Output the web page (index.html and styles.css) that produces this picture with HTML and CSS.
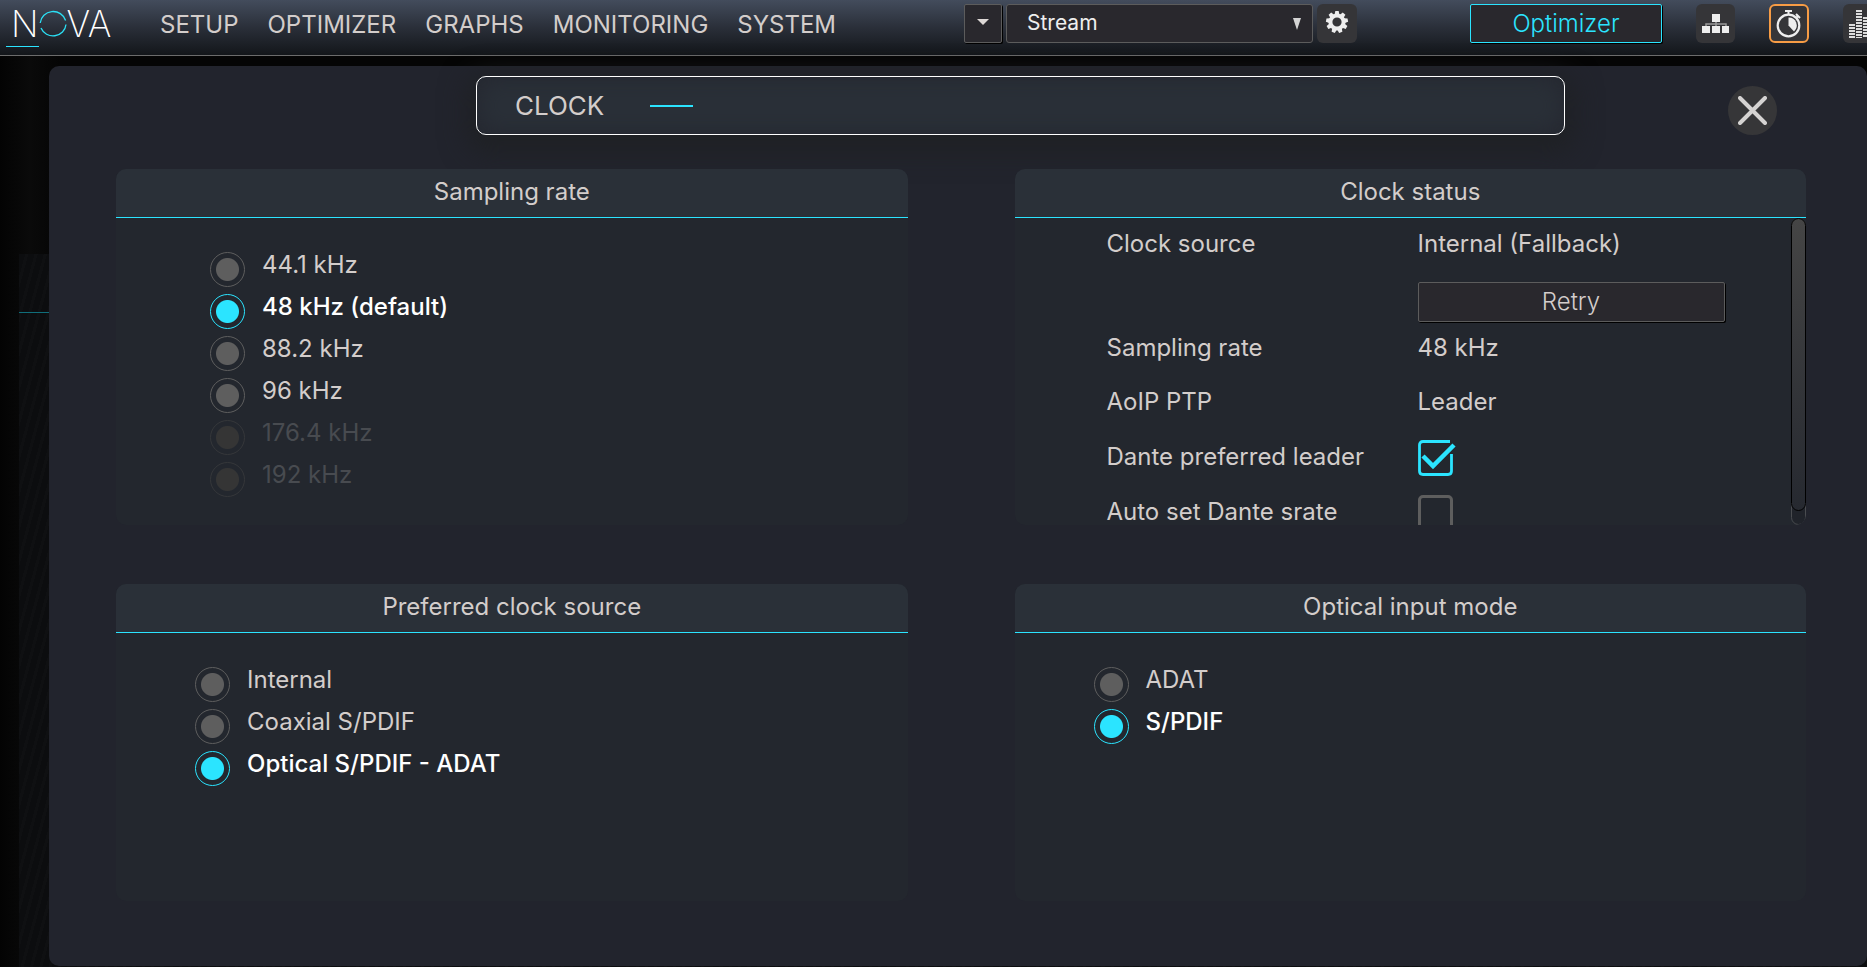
FILE: index.html
```html
<!DOCTYPE html>
<html lang="en">
<head>
<meta charset="utf-8">
<title>NOVA – Clock</title>
<link rel="stylesheet" href="styles.css">
</head>
<body>
<header class="topbar">
  <div class="menu">
    <a class="logo" href="#" aria-label="NOVA">
      <span>N</span>
      <svg class="logo-o" viewBox="0 0 28 28" aria-hidden="true"><path d="M1.2 13A13 12.6 0 0 1 26.6 10.5M27 14.500A13 12.600 0 0 1 2 18" fill="none" stroke="#2be0f5" stroke-width="1.300"/></svg>
      <span>VA</span>
    </a>
    <nav class="nav">
      <a href="#">SETUP</a>
      <a href="#">OPTIMIZER</a>
      <a href="#">GRAPHS</a>
      <a href="#">MONITORING</a>
      <a href="#">SYSTEM</a>
    </nav>
  </div>
  <div class="presets">
    <button class="drop" aria-label="Open list"><svg width="12" height="6" viewBox="0 0 12 6"><path d="M0 0h12L6 6z" fill="#ddd8d6"/></svg></button>
    <div class="select-wrap">
      <select class="select" aria-label="Preset"><option>Stream</option></select>
      <svg class="select-arrow" width="8" height="12" viewBox="0 0 8 12"><path d="M0 0h8L4 12z" fill="#d4d4d4"/></svg>
    </div>
    <button class="tool tool-gear" aria-label="Settings">
      <svg width="24" height="24" viewBox="-12 -12 24 24"><circle r="6.600" fill="none" stroke="#eee" stroke-width="4"/><g fill="#eee"><path id="tooth" d="M-2.400-7.500L-1.700-11h3.400L2.400-7.500z"/><use href="#tooth" transform="rotate(40)"/><use href="#tooth" transform="rotate(80)"/><use href="#tooth" transform="rotate(120)"/><use href="#tooth" transform="rotate(160)"/><use href="#tooth" transform="rotate(200)"/><use href="#tooth" transform="rotate(240)"/><use href="#tooth" transform="rotate(280)"/><use href="#tooth" transform="rotate(320)"/></g></svg>
    </button>
  </div>
  <div class="actions">
    <button class="optimizer">Optimizer</button>
    <button class="tool" aria-label="Network">
      <svg width="28" height="20" viewBox="0 0 28 20"><path d="M14 7v5M4 12v-2h20v2" fill="none" stroke="#999" stroke-width="1.500"/><path d="M10 0h8v8h-8zM0 12h8v7H0zM10 12h8v7h-8zM20 12h7v7h-7z" fill="#eee"/></svg>
    </button>
    <button class="tool tool-active" aria-label="Clock">
      <svg width="26" height="28" viewBox="0 0 26 28"><circle cx="12.500" cy="15.500" r="10.800" fill="none" stroke="#eee" stroke-width="2.200"/><path d="M9 1h7M12.500 1v4M20 4l4 4M22 6l-2 2" fill="none" stroke="#eee" stroke-width="2"/><path d="M12.500 7.500V15.500L18 21.500A8 8 0 0 0 12.500 7.500z" fill="#eee"/></svg>
    </button>
    <button class="tool tool-meter" aria-label="Meters">
      <svg width="28" height="28" viewBox="0 0 28 28"><path d="M3 14v14M10 0v28M17 7v21M24 3v25" stroke="#ddd" stroke-width="6" stroke-dasharray="2 1"/></svg>
    </button>
  </div>
</header>

<main class="stage">
  <div class="behind"></div>
  <section class="modal">
    <div class="modal-head">
      <h1 class="title">CLOCK<span class="dash"></span></h1>
      <button class="close" aria-label="Close"><svg width="29" height="29" viewBox="0 0 29 29"><path d="M2 2l25 25M27 2L2 27" stroke="#d5d3d2" stroke-width="4" stroke-linecap="round"/></svg></button>
    </div>

    <div class="cards">
      <section class="card">
        <h2>Sampling rate</h2>
        <div class="options options-wide">
          <label><input type="radio" name="rate"><span>44.1 kHz</span></label>
          <label><input type="radio" name="rate" checked><span>48 kHz (default)</span></label>
          <label><input type="radio" name="rate"><span>88.2 kHz</span></label>
          <label><input type="radio" name="rate"><span>96 kHz</span></label>
          <label><input type="radio" name="rate" disabled><span>176.4 kHz</span></label>
          <label><input type="radio" name="rate" disabled><span>192 kHz</span></label>
        </div>
      </section>

      <section class="card">
        <h2>Clock status</h2>
        <div class="scroller">
          <div class="status">
            <div class="row"><span>Clock source</span><span>Internal (Fallback)</span></div>
            <div class="row row-button"><button class="retry">Retry</button></div>
            <div class="row"><span>Sampling rate</span><span>48 kHz</span></div>
            <div class="row row-check"><span>AoIP PTP</span><span>Leader</span></div>
            <div class="row row-check"><label for="leader">Dante preferred leader</label>
              <span class="check"><input type="checkbox" id="leader" checked><svg viewBox="0 0 38 36"><path d="M32 1.500H5Q1.500 1.500 1.500 5v26Q1.500 34.500 5 34.500h25Q33.500 34.500 33.500 31V14" fill="none" stroke="#2be4ff" stroke-width="2.800"/><path d="M5 16l10 10L36 5" fill="none" stroke="#2be4ff" stroke-width="4.500"/></svg></span></div>
            <div class="row row-check"><label for="srate">Auto set Dante srate</label>
              <span class="check"><input type="checkbox" id="srate"></span></div>
          </div>
          <div class="track"><div class="thumb"></div></div>
        </div>
      </section>

      <section class="card">
        <h2>Preferred clock source</h2>
        <div class="options">
          <label><input type="radio" name="source"><span>Internal</span></label>
          <label><input type="radio" name="source"><span>Coaxial S/PDIF</span></label>
          <label><input type="radio" name="source" checked><span>Optical S/PDIF - ADAT</span></label>
        </div>
      </section>

      <section class="card">
        <h2>Optical input mode</h2>
        <div class="options">
          <label><input type="radio" name="optical"><span>ADAT</span></label>
          <label><input type="radio" name="optical" checked><span>S/PDIF</span></label>
        </div>
      </section>
    </div>
  </section>
</main>
</body>
</html>
```

FILE: styles.css
```css
* { box-sizing: border-box; }

body {
  margin: 0;
  min-height: 100vh;
  display: flex;
  flex-direction: column;
  overflow: hidden;
  background: #000;
  color: #d3cdcb;
  font: 400 24px/30px Inter, "Liberation Sans", sans-serif;
}

button, select { font: inherit; color: inherit; padding: 0; margin: 0; }
a { color: inherit; text-decoration: none; }

.topbar {
  display: grid;
  grid-template-columns: 964px 506px auto;
  height: 56px;
  flex: none;
  overflow: hidden;
  background: linear-gradient(#434c5c, #2a2f39 50%, #13161a);
  border-bottom: 1px solid #6c6c6c;
}

.menu { display: flex; }
.logo {
  display: flex;
  align-items: center;
  width: 160px;
  height: 47px;
  padding-left: 11px;
  color: #fff;
  font-size: 36px;
  font-weight: 200;
  background: linear-gradient(#2be4ff, #2be4ff) 6px 100% / 33px 1px no-repeat;
}
.logo-o { width: 28px; height: 28px; flex: none; }
.nav { display: flex; gap: 29px; padding-top: 10px; }

.presets, .actions { display: flex; padding-top: 4px; }
.presets { gap: 4px; }
.drop, .optimizer, .retry {
  background: #29282d;
  border: 1px solid #5c5c5c;
  border-radius: 2px;
  box-shadow: 1px 1px 0 #000;
}
.drop { display: flex; align-items: center; justify-content: center; width: 38px; height: 39px; padding-bottom: 4px; }
.select-wrap { position: relative; width: 307px; height: 39px; }
.select {
  appearance: none;
  width: 100%;
  height: 100%;
  padding: 0 20px 2px;
  background: #29282d;
  border: 1px solid #5c5c5c;
  border-radius: 3px;
  color: #eee;
  font-size: 21px;
}
.select-arrow { position: absolute; right: 12px; top: 14px; }
.tool {
  display: flex;
  flex: none;
  align-items: center;
  justify-content: center;
  width: 39px;
  height: 39px;
  background: #353538;
  border: 0;
  border-radius: 6px;
}
.tool-gear { width: 40px; padding-bottom: 3px; }
.tool-active { width: 40px; border: 2px solid #f79c45; }
.tool-meter { justify-content: flex-start; padding-left: 6px; }
.optimizer { width: 192px; height: 39px; border-color: #2be4ff; color: #2be4ff; font-weight: 300; }
.actions { gap: 34px; }

.stage {
  position: relative;
  display: flex;
  flex: 1;
  padding: 10px 0 1px 49px;
  background: linear-gradient(90deg, #030303, #0a0a0a 30px, #050505 60px), #000;
}
.behind {
  position: absolute;
  inset: 198px 0 0 19px;
  background:
    linear-gradient(#106e7a, #106e7a) 0 58px / 100% 1px no-repeat,
    repeating-linear-gradient(105deg, #0c0d0f 0 6px, #0f1012 6px 9px);
}
.modal {
  position: relative;
  flex: 1;
  border-radius: 10px;
  background: #22242d;
}
.modal-head {
  display: flex;
  align-items: flex-start;
  padding: 10px 90px 0 427px;
  height: 103px;
}
.title {
  display: flex;
  flex: 1;
  align-items: center;
  gap: 46px;
  max-width: 1089px;
  height: 59px;
  margin: 0 163px 0 0;
  padding-left: 38px;
  border: 1px solid #fff;
  border-radius: 10px;
  font-size: 26px;
  font-weight: 400;
  background: #2a3038;
  box-shadow: inset 0 0 24px #24262f, 0 8px 28px 8px #1f2124;
}
.dash { width: 43px; height: 2px; background: #2be4ff; }
.close {
  display: flex;
  flex: none;
  align-items: center;
  justify-content: center;
  width: 49px;
  height: 49px;
  margin-top: 10px;
  border: 0;
  border-radius: 50%;
  background: #363638;
}

.cards {
  position: relative;
  display: grid;
  grid-template-columns: 1fr 1fr;
  grid-template-rows: 356px 317px;
  gap: 59px 107px;
  padding: 0 61px 0 67px;
}
.card {
  display: flex;
  flex-direction: column;
  overflow: hidden;
  border-radius: 10px;
  background: #23272e;
}
.card h2 {
  margin: 0;
  padding: 8px 0 10px;
  border-bottom: 1px solid #2be4ff;
  background: #2a3038;
  font-size: 24px;
  line-height: 30px;
  font-weight: 400;
  text-align: center;
}
.options { padding: 32px 0 0 79px; }
.options-wide { padding-left: 94px; }
.options label { display: flex; gap: 17px; height: 42px; }
.options input {
  appearance: none;
  flex: none;
  width: 35px;
  height: 35px;
  margin: 2px 0 0;
  border: 1px solid #5e5e5e;
  border-radius: 50%;
  background: radial-gradient(circle, #5e5e5e 11px, transparent 12px);
}
.options input:checked { border-color: #2be4ff; background: radial-gradient(circle, #2be4ff 11px, transparent 12px); }
.options input:checked + span { color: #fff; font-weight: 500; }
.options input:disabled { border-color: #35373a; background: radial-gradient(circle, #353535 11px, transparent 12px); }
.options input:disabled + span { color: #484b50; }

.scroller { display: flex; flex: 1; min-height: 0; }
.status { flex: 1; overflow: hidden; padding-left: 92px; }
.row { display: grid; grid-template-columns: 311px 1fr; align-items: center; height: 52px; }
.row-button { padding-top: 12px; }
.retry { grid-column: 2; width: 307px; height: 40px; font-weight: 300; }
.row-check { height: 55px; }
.check { position: relative; width: 38px; height: 36px; margin-top: 2px; }
.check input { appearance: none; display: block; width: 35px; height: 36px; margin: 0; border: 3px solid #5e5e5e; border-radius: 5px; }
.check input:checked { border-color: transparent; }
.check svg { position: absolute; inset: 0; pointer-events: none; }
.track { width: 15px; border: 1px solid #4a4c50; border-radius: 8px; background: #20232a; }
.thumb { width: 15px; height: 96%; margin: -1px; border: 1px solid #000; border-radius: 8px; background: linear-gradient(#454545, #262930); }
```
